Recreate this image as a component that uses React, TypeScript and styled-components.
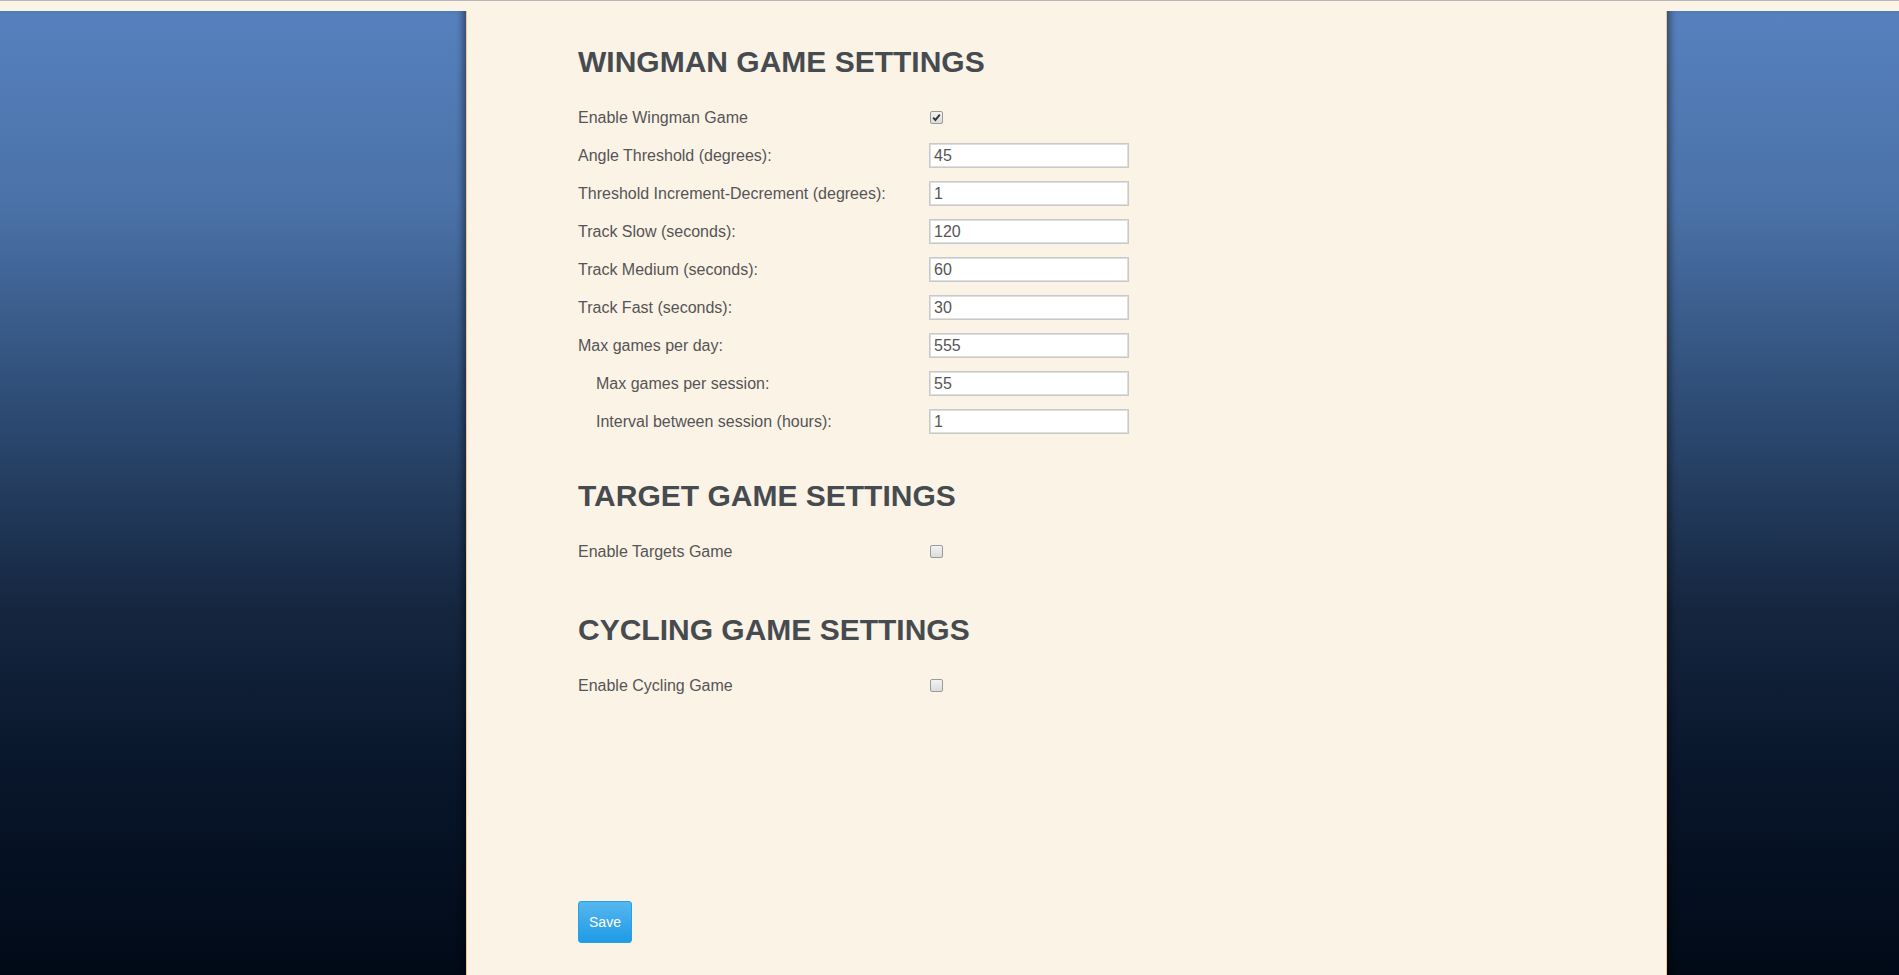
import React from "react";
import styled, { createGlobalStyle } from "styled-components";

const Global = createGlobalStyle`
  html, body { margin: 0; padding: 0; }
  body {
    background: #fcf3e7;
    font-family: "Liberation Sans", Arial, Helvetica, sans-serif;
    color: #555;
  }
`;

const Page = styled.div`
  min-height: 100vh;
  display: flex;
  flex-direction: column;
  border-top: 1px solid #b9b6b3;
  box-sizing: border-box;
`;

const TopStrip = styled.div`
  height: 10px;
  background: #fcf3e7;
`;

const Body = styled.div`
  flex: 1;
  display: flex;
`;

const SidePanel = styled.div<{ $side: "left" | "right" }>`
  background: linear-gradient(
    180deg,
    #5681be 0%,
    #4b72a8 20%,
    #2c4a72 42%,
    #15263f 62%,
    #08152a 80%,
    #010a17 100%
  );
  ${(p) =>
    p.$side === "left"
      ? `width: 466px; border-right: 1px solid #efc894; box-shadow: inset -7px 0 7px -4px rgba(0,0,0,0.45);`
      : `flex: 1; border-left: 1px solid #efc894; box-shadow: inset 7px 0 7px -4px rgba(0,0,0,0.45);`}
`;

const Main = styled.main`
  width: 1199px;
  background: #fcf3e7;
  padding: 34px 0 0 111px;
  box-sizing: border-box;
  display: flex;
  flex-direction: column;
`;

const Section = styled.section<{ $gap: number }>`
  margin-top: ${(p) => p.$gap}px;
`;

const Heading = styled.h2`
  margin: 0 0 20px;
  font-family: "Liberation Sans", Arial, sans-serif;
  font-size: 30px;
  line-height: 33px;
  font-weight: 700;
  color: #464b50;
`;

const Row = styled.div`
  display: flex;
  align-items: center;
  height: 38px;
`;

const Label = styled.label<{ $indent?: boolean }>`
  width: 351px;
  box-sizing: border-box;
  padding-left: ${(p) => (p.$indent ? "18px" : "0")};
  padding-top: 2px;
  font-size: 16px;
  color: #555;
`;

const TextInput = styled.input`
  width: 200px;
  height: 25px;
  box-sizing: border-box;
  border: 1px solid #c9c9c9;
  box-shadow: inset 0 0 0 1px #dedede;
  background: #fff;
  padding: 1px 4px 0;
  font-family: "Liberation Sans", Arial, sans-serif;
  font-size: 16px;
  color: #555;
  outline: none;
`;

const CheckBox = styled.span<{ $checked?: boolean }>`
  width: 13px;
  height: 13px;
  box-sizing: border-box;
  margin-left: 1px;
  margin-top: 1px;
  border: 1px solid #9a9a9a;
  border-radius: 2px;
  background: linear-gradient(180deg, #f3f3f3 0%, #dcdcdc 100%);
  display: inline-flex;
  align-items: center;
  justify-content: center;
  svg { display: block; }
`;

const SaveBar = styled.div`
  margin-top: 197px;
`;

const SaveButton = styled.button`
  width: 54px;
  height: 42px;
  border: 1px solid #2a9fe4;
  border-radius: 3px;
  background: linear-gradient(180deg, #57b6ef 0%, #1e9be6 100%);
  color: #fff;
  font-family: "Liberation Sans", Arial, sans-serif;
  font-size: 14px;
  padding: 0;
  cursor: pointer;
`;

type Field = { label: string; value?: string; indent?: boolean; check?: boolean; checked?: boolean };

const Check = ({ checked }: { checked?: boolean }) => (
  <CheckBox $checked={checked} role="checkbox" aria-checked={!!checked}>
    {checked && (
      <svg width="9" height="9" viewBox="0 0 9 9">
        <path d="M1.2 4.6 L3.4 7 L7.8 1.6" fill="none" stroke="#333" strokeWidth="1.9" />
      </svg>
    )}
  </CheckBox>
);

const FieldRow = ({ f }: { f: Field }) => (
  <Row>
    <Label $indent={f.indent}>{f.label}</Label>
    {f.check ? <Check checked={f.checked} /> : <TextInput defaultValue={f.value} />}
  </Row>
);

const wingman: Field[] = [
  { label: "Enable Wingman Game", check: true, checked: true },
  { label: "Angle Threshold (degrees):", value: "45" },
  { label: "Threshold Increment-Decrement (degrees):", value: "1" },
  { label: "Track Slow (seconds):", value: "120" },
  { label: "Track Medium (seconds):", value: "60" },
  { label: "Track Fast (seconds):", value: "30" },
  { label: "Max games per day:", value: "555" },
  { label: "Max games per session:", value: "55", indent: true },
  { label: "Interval between session (hours):", value: "1", indent: true },
];

export default function App() {
  return (
    <>
      <Global />
      <Page>
        <TopStrip />
        <Body>
          <SidePanel $side="left" />
          <Main>
            <Section $gap={0}>
              <Heading>WINGMAN GAME SETTINGS</Heading>
              {wingman.map((f) => (
                <FieldRow key={f.label} f={f} />
              ))}
            </Section>
            <Section $gap={39}>
              <Heading>TARGET GAME SETTINGS</Heading>
              <FieldRow f={{ label: "Enable Targets Game", check: true }} />
            </Section>
            <Section $gap={43}>
              <Heading>CYCLING GAME SETTINGS</Heading>
              <FieldRow f={{ label: "Enable Cycling Game", check: true }} />
            </Section>
            <SaveBar>
              <SaveButton>Save</SaveButton>
            </SaveBar>
          </Main>
          <SidePanel $side="right" />
        </Body>
      </Page>
    </>
  );
}
